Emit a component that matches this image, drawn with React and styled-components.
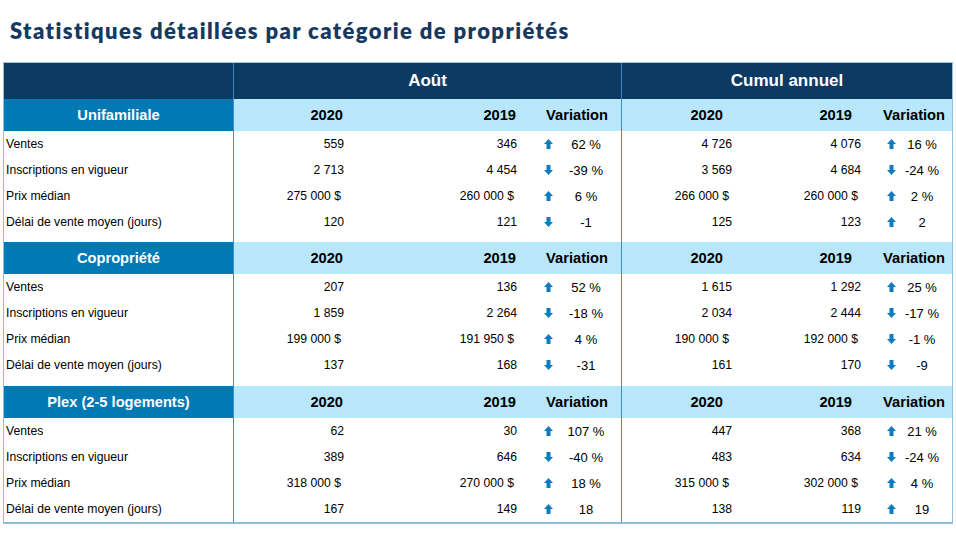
import React from "react";
import styled, { createGlobalStyle, css } from "styled-components";

const GlobalStyle = createGlobalStyle`
  html, body { margin: 0; padding: 0; background: #ffffff; }
  body { font-family: "Liberation Sans", Arial, sans-serif; color: #000; }
`;

const cols = css`
  display: grid;
  grid-template-columns: 229px 114px 173px 46px 40px 15px 114px 129px 36px 44px 8px;
`;

const Page = styled.div`
  padding: 15px 0 0 3px;
  width: 953px;
  box-sizing: border-box;
`;

const Title = styled.h1`
  margin: 0 0 0 7px;
  font-family: "Lato", "Liberation Sans", sans-serif;
  font-weight: 800;
  font-size: 22px;
  line-height: 32px;
  height: 47px;
  color: #17395f;
  letter-spacing: 1.4px;
`;

const Table = styled.div`
  width: 950px;
  box-sizing: border-box;
  border-left: 1px solid #8cbfdc;
  border-right: 1px solid #8cbfdc;
  border-bottom: 2px solid #8cbfdc;
  border-top: 1px solid #9fcbe3;
`;

const Row = styled.div`
  ${cols};
  height: ${(p) => p.$h}px;
`;

const Cell = styled.div`
  box-sizing: border-box;
  grid-column: ${(p) => p.$span || "auto"};
  display: flex;
  align-items: center;
  justify-content: ${(p) =>
    p.$align === "left" ? "flex-start" : p.$align === "center" ? "center" : "flex-end"};
  padding-left: ${(p) => p.$pl || 0}px;
  padding-right: ${(p) => p.$pr || 0}px;
  border-left: ${(p) => (p.$div ? "1px solid #3d8dc2" : "none")};
  font-size: ${(p) => p.$fs || 12.2}px;
  white-space: nowrap;
`;

const TopCell = styled(Cell)`
  background: #0d3a62;
  color: #ffffff;
  font-weight: bold;
  font-size: 17px;
  border-left-color: #3f86b8;
`;

const SectionTitle = styled(Cell)`
  background: #0079b5;
  color: #ffffff;
  font-weight: bold;
  font-size: 14.67px;
`;

const SubHead = styled(Cell)`
  background: #b8e6fb;
  font-weight: bold;
  font-size: 14.67px;
`;

const Arrow = ({ dir }) => (
  <svg width="9" height="10" viewBox="0 0 9 10" style={{ display: "block" }}>
    <path
      d={dir === "up" ? "M4.5 0 L9 5 L6.5 5 L6.5 10 L2.5 10 L2.5 5 L0 5 Z" : "M4.5 10 L9 5 L6.5 5 L6.5 0 L2.5 0 L2.5 5 L0 5 Z"}
      fill="#0c7cc0"
    />
  </svg>
);

const labels = ["Ventes", "Inscriptions en vigueur", "Prix médian", "Délai de vente moyen (jours)"];

const sections = [
  {
    name: "Unifamiliale",
    gap: 7,
    rows: [
      ["559", "346", "up", "62 %", "4 726", "4 076", "up", "16 %"],
      ["2 713", "4 454", "down", "-39 %", "3 569", "4 684", "down", "-24 %"],
      ["275 000 $", "260 000 $", "up", "6 %", "266 000 $", "260 000 $", "up", "2 %"],
      ["120", "121", "down", "-1", "125", "123", "up", "2"],
    ],
  },
  {
    name: "Copropriété",
    gap: 8,
    rows: [
      ["207", "136", "up", "52 %", "1 615", "1 292", "up", "25 %"],
      ["1 859", "2 264", "down", "-18 %", "2 034", "2 444", "down", "-17 %"],
      ["199 000 $", "191 950 $", "up", "4 %", "190 000 $", "192 000 $", "down", "-1 %"],
      ["137", "168", "down", "-31", "161", "170", "down", "-9"],
    ],
  },
  {
    name: "Plex (2-5 logements)",
    gap: 0,
    rows: [
      ["62", "30", "up", "107 %", "447", "368", "up", "21 %"],
      ["389", "646", "down", "-40 %", "483", "634", "down", "-24 %"],
      ["318 000 $", "270 000 $", "up", "18 %", "315 000 $", "302 000 $", "up", "4 %"],
      ["167", "149", "up", "18", "138", "119", "up", "19"],
    ],
  },
];

const nbsp = (s) => s.replace(/ /g, "\u00a0");
const pad = (v) => (v.includes("$") ? 6 : 3);

const DataRow = ({ label, r }) => (
  <Row $h={26}>
    <Cell $align="left" $pl={2}>{label}</Cell>
    <Cell $div $pr={pad(r[0])}>{nbsp(r[0])}</Cell>
    <Cell $pr={pad(r[1])}>{nbsp(r[1])}</Cell>
    <Cell $pr={13}><Arrow dir={r[2]} /></Cell>
    <Cell $align="center" $fs={13}>{nbsp(r[3])}</Cell>
    <Cell />
    <Cell $div $pr={pad(r[4])}>{nbsp(r[4])}</Cell>
    <Cell $pr={pad(r[5])}>{nbsp(r[5])}</Cell>
    <Cell $pr={4}><Arrow dir={r[6]} /></Cell>
    <Cell $align="center" $fs={13}>{nbsp(r[7])}</Cell>
    <Cell />
  </Row>
);

export default function App() {
  return (
    <Page>
      <GlobalStyle />
      <Title>Statistiques détaillées par catégorie de propriétés</Title>
      <Table>
        <Row $h={36}>
          <TopCell />
          <TopCell $div $span="2 / 7" $align="center">Août</TopCell>
          <TopCell $div $span="7 / 12" $align="center">Cumul annuel</TopCell>
        </Row>
        {sections.map((s) => (
          <React.Fragment key={s.name}>
            <Row $h={32}>
              <SectionTitle $align="center">{s.name}</SectionTitle>
              <SubHead $div $pr={4}>2020</SubHead>
              <SubHead $pr={4}>2019</SubHead>
              <SubHead $span="4 / 7" $pr={13}>Variation</SubHead>
              <SubHead $div $pr={12}>2020</SubHead>
              <SubHead $pr={12}>2019</SubHead>
              <SubHead $span="9 / 12" $pr={7}>Variation</SubHead>
            </Row>
            {s.rows.map((r, i) => (
              <DataRow key={i} label={labels[i]} r={r} />
            ))}
            {s.gap > 0 && (
              <Row $h={s.gap}>
                <Cell />
                <Cell $div $span="2 / 7" />
                <Cell $div $span="7 / 12" />
              </Row>
            )}
          </React.Fragment>
        ))}
      </Table>
    </Page>
  );
}
